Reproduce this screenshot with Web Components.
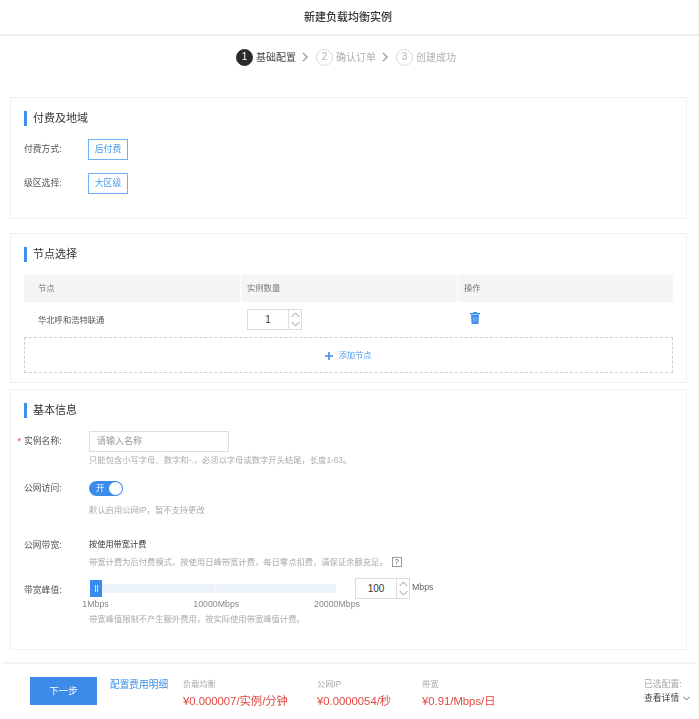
<!DOCTYPE html>
<html lang="zh-CN"><head><meta charset="utf-8"><title>新建负载均衡实例</title>
<style>
html,body{margin:0;padding:0;background:#fff;font-family:"Liberation Sans","Noto Sans CJK SC",sans-serif;color:#333}
lb-page{display:block;width:699px;height:719px;overflow:hidden;filter:blur(.35px)}
</style></head><body>
<lb-page>
  <lb-header>新建负载均衡实例</lb-header>
  <lb-steps></lb-steps>
  <lb-card heading="付费及地域" style="margin-top:31px;height:122px">
    <lb-field label="付费方式:" style="--lh:21px;margin-top:13px"><lb-option>后付费</lb-option></lb-field>
    <lb-field label="级区选择:" style="--lh:21px;margin-top:13px"><lb-option>大区级</lb-option></lb-field>
  </lb-card>
  <lb-card heading="节点选择" style="margin-top:14px;height:150px">
    <lb-nodes></lb-nodes>
  </lb-card>
  <lb-card heading="基本信息" style="margin-top:6px;height:261px;--col:65px">
    <lb-field label="实例名称:" required style="--lh:21px;margin-top:13px">
      <lb-textbox>请输入名称</lb-textbox>
      <lb-hint style="margin-top:2px">只能包含小写字母、数字和-.，必须以字母或数字开头结尾，长度1-63。</lb-hint>
    </lb-field>
    <lb-field label="公网访问:" style="--lh:15px;margin-top:15px">
      <lb-switch>开</lb-switch>
      <lb-hint style="margin-top:8px">默认启用公网IP，暂不支持更改</lb-hint>
    </lb-field>
    <lb-field label="公网带宽:" style="--lh:12px;margin-top:23px">
      <div style="font:8.2px/12px 'Liberation Sans','Noto Sans CJK SC',sans-serif;color:#333">按使用带宽计费</div>
      <lb-hint style="margin-top:5px" help>带宽计费为后付费模式，按使用日峰带宽计费，每日零点扣费，请保证余额充足。</lb-hint>
    </lb-field>
    <lb-field label="带宽峰值:" style="--lh:24px;margin-top:10px">
      <lb-slider></lb-slider>
      <lb-hint style="margin-top:3px">带宽峰值限制不产生额外费用，按实际使用带宽峰值计费。</lb-hint>
    </lb-field>
  </lb-card>
  <lb-footer>
    <lb-price name="负载均衡" style="width:134px">¥0.000007/实例/分钟</lb-price>
    <lb-price name="公网IP" style="width:105px">¥0.0000054/秒</lb-price>
    <lb-price name="带宽" style="width:222px">¥0.91/Mbps/日</lb-price>
  </lb-footer>
</lb-page>
<script>
const CJK = `"Liberation Sans","Noto Sans CJK SC",sans-serif`;
function def(name, html, cls) {
  const t = document.createElement('template');
  t.innerHTML = html;
  customElements.define(name, class extends HTMLElement {
    constructor(){ super(); this.attachShadow({mode:'open'}).appendChild(t.content.cloneNode(true)); }
    connectedCallback(){ cls && cls.call(this, this.shadowRoot); }
  });
}
def('lb-header', `<style>:host{display:flex;align-items:center;justify-content:center;height:34px;padding-right:3px;border-bottom:1px solid #e9e9e9;box-shadow:0 1px 0 #f3f3f3;font:500 11px/1 ${CJK};color:#333}</style><slot></slot>`);

const chev = `<svg width="6" height="10" viewBox="0 0 6 10"><path d="M1 .8 5.2 5 1 9.2" fill="none" stroke="#8a8a8a" stroke-width="1.1"/></svg>`;
def('lb-step', `<style>
:host{display:flex;align-items:center;font:10px/17px ${CJK};color:#b0b0b0}
i{font-style:normal;box-sizing:border-box;width:17px;height:17px;border-radius:50%;border:1px solid #d8d8d8;display:flex;align-items:center;justify-content:center;font-size:10px;line-height:1;margin-right:3px}
:host([active]){color:#444}
:host([active]) i{background:#2b2b2b;border-color:#2b2b2b;color:#fff}
.c{display:flex;margin-left:6px;margin-right:8px}
:host([last]) .c{display:none}
</style><i></i><slot></slot><span class="c">${chev}</span>`, function(r){ r.querySelector('i').textContent = this.getAttribute('n'); });
def('lb-steps', `<style>:host{display:flex;justify-content:center;margin-top:13px;padding-right:7px;height:18px;align-items:center}</style>
<lb-step n="1" active>基础配置</lb-step><lb-step n="2">确认订单</lb-step><lb-step n="3" last>创建成功</lb-step>`);

def('lb-card', `<style>
:host{display:block;box-sizing:border-box;margin-left:10px;width:677px;border:1px solid #f0f0f0;padding:13px 13px 0}
h2{margin:0;height:15px;border-left:3px solid #3d8fe9;padding-left:6px;font:400 11px/15px ${CJK};color:#333}
</style><h2></h2><slot></slot>`, function(r){ r.querySelector('h2').textContent = this.getAttribute('heading'); });

def('lb-field', `<style>
:host{display:grid;grid-template-columns:var(--col,64px) 1fr;position:relative}
label{font:8.8px/var(--lh,21px) ${CJK};color:#555;white-space:nowrap}
b{display:none;position:absolute;left:-6.5px;top:0;color:#e0403a;font:9px/var(--lh,21px) ${CJK}}
:host([required]) b{display:block}
</style><b>*</b><label></label><div><slot></slot></div>`, function(r){ r.querySelector('label').textContent = this.getAttribute('label'); });

def('lb-option', `<style>:host{display:flex;box-sizing:border-box;align-items:center;justify-content:center;width:40px;height:21px;border:1px solid #6fb0f4;font:8.8px/1 ${CJK};color:#4c9bec;background:#fff}</style><slot></slot>`);

def('lb-spinner', `<style>
:host{display:inline-flex;box-sizing:border-box;height:21px;border:1px solid #ddd;background:#fff;font:10px/1 "Liberation Sans",sans-serif;color:#333}
.v{flex:1;display:flex;align-items:center;justify-content:center}
.a{width:12px;border-left:1px solid #ddd;display:flex;flex-direction:column;align-items:center;justify-content:space-around}
svg{display:block}
</style><div class="v"><slot></slot></div><div class="a">
<svg width="9" height="6" viewBox="0 0 9 6"><path d="M.7 5 4.5 1l3.8 4" fill="none" stroke="#999"/></svg>
<svg width="9" height="6" viewBox="0 0 9 6"><path d="M.7 1l3.8 4 3.8-4" fill="none" stroke="#999"/></svg></div>`);

def('lb-nodes', `<style>
:host{display:block;margin-top:13px;font:8.3px/1 ${CJK};color:#555}
.row{display:grid;grid-template-columns:216px 216px 1fr;column-gap:1px}
.head>div{background:#f5f5f5;height:27px;display:flex;align-items:center;padding-left:6px;color:#777}
.head>div:first-child,.body>div:first-child{padding-left:14px}
.body{height:35px}
.body>div{display:flex;align-items:center;padding-left:6px}
.body>div:first-child{padding-top:1px}
lb-spinner{width:55px}
.del{padding:0 0 4px 12px!important}
.add{box-sizing:border-box;height:36px;padding-top:1px;border:1px dashed #cfcfcf;display:flex;align-items:center;justify-content:center;gap:5px;color:#4c9bec;font-size:8.3px}
</style>
<div class="row head"><div>节点</div><div>实例数量</div><div>操作</div></div>
<div class="row body"><div>华北呼和浩特联通</div><div><lb-spinner>1</lb-spinner></div><div class="del">
<svg width="10" height="12" viewBox="0 0 10 12"><path fill="#3d8fe9" d="M3.3 0h3.4l.5 1H10v1.4H0V1h2.8zM1 3h8l-.5 8.2a.8.8 0 0 1-.8.8H2.3a.8.8 0 0 1-.8-.8z"/><path d="M3.5 5v5M5 5v5M6.5 5v5" stroke="#a9cdf6" stroke-width=".5"/></svg>
</div></div>
<div class="add"><svg width="8" height="8" viewBox="0 0 8 8"><path d="M4 0v8M0 4h8" stroke="#3d8fe9" stroke-width="1.6"/></svg><span>添加节点</span></div>`);

def('lb-textbox', `<style>:host{display:flex;box-sizing:border-box;align-items:center;width:140px;height:21px;border:1px solid #ddd;padding-left:7px;font:9px/1 ${CJK};color:#999;background:#fff}</style><slot></slot>`);

def('lb-hint', `<style>
:host{display:flex;align-items:center;font:8.3px/12px ${CJK};color:#aaa;white-space:nowrap;margin-top:0}
span{display:none;box-sizing:border-box;width:10px;height:10px;margin:-1px 0 0 4px;border:1px solid #999;color:#555;font-size:8px;line-height:8px;text-align:center}
:host([help]) span{display:block}
</style><slot></slot><span>?</span>`);

def('lb-switch', `<style>
:host{display:flex;box-sizing:border-box;width:34px;height:15px;border-radius:8px;background:#3d8be8;align-items:center;padding:0 1px 0 7px;justify-content:space-between;font:8.5px/1 ${CJK};color:#fff}
i{width:13px;height:13px;border-radius:50%;background:#fff}
</style><slot></slot><i></i>`);

def('lb-slider', `<style>
:host{display:block;position:relative}
.top{display:flex;height:21px;align-items:center}
.h{box-sizing:border-box;margin-left:1px;width:12px;height:17px;background:#3d8be8;display:flex;align-items:center;justify-content:center;position:relative;top:-.5px;gap:1px}
.h i{width:1px;height:7px;background:#cfe3fb}
.t{width:112px;height:9px;background:#ebf2fc}
.t+.t{margin-left:1px;width:121px}
lb-spinner{width:55px;margin-left:19px}
.u{margin-left:2px;font:8.8px/1 "Liberation Sans",sans-serif;color:#666;position:relative;top:-1px}
.ticks{display:flex;justify-content:space-between;width:241.5px;margin-left:6.5px;height:12px;margin-top:-1px;font:8.8px/12px "Liberation Sans",sans-serif;color:#888}
.ticks span{width:0;display:flex;justify-content:center;white-space:nowrap}
</style>
<div class="top"><div class="h"><i></i><i></i></div><div class="t"></div><div class="t"></div><lb-spinner>100</lb-spinner><span class="u">Mbps</span></div>
<div class="ticks"><span>1Mbps</span><span>10000Mbps</span><span>20000Mbps</span></div>`);

def('lb-price', `<style>
:host{display:block;flex:none;margin-top:2px}
p{margin:0;font:8.2px/12px ${CJK};color:#a8a8a8}
div{margin-top:3px;font:11.3px/14px ${CJK};color:#e2483f;white-space:nowrap}
</style><p></p><div><slot></slot></div>`, function(r){ r.querySelector('p').textContent = this.getAttribute('name'); });

def('lb-footer', `<style>
:host{display:flex;align-items:flex-start;margin:12px 3px 0 2px;border-top:2px solid #f4f4f4;padding:13px 0 0 28px;height:55px;font:9px/1 ${CJK}}
button{all:unset;box-sizing:border-box;width:67px;height:28px;background:#3d8be8;color:#fff;font:9.5px/28px ${CJK};text-align:center}
a{margin:2px 14px 0 13px;font:9.7px/12px ${CJK};color:#3d8fe9;white-space:nowrap;width:59px}
.r{color:#a8a8a8;font:8.8px/12px ${CJK};margin-top:1px}
.d{margin-top:2px;color:#444;display:flex;align-items:center;gap:4px}
</style><button>下一步</button><a>配置费用明细</a><slot></slot>
<div class="r">已选配置:<div class="d">查看详情<svg width="7" height="5" viewBox="0 0 7 5"><path d="M.4.7 3.5 3.9 6.6.7" fill="none" stroke="#666"/></svg></div></div>`);
customElements.define('lb-page', class extends HTMLElement { constructor(){ super(); this.attachShadow({mode:'open'}).innerHTML = '<slot></slot>'; } });
</script>
</body></html>
